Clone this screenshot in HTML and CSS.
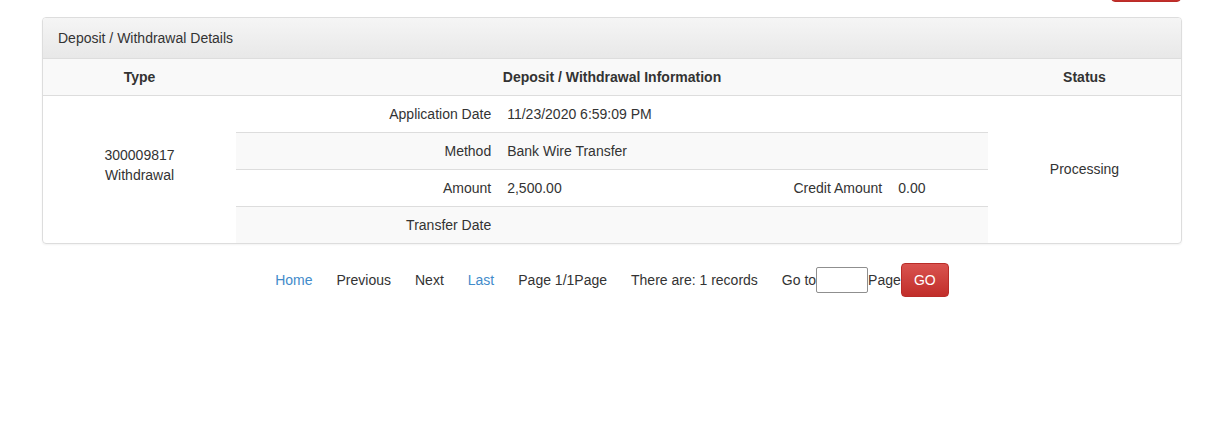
FILE: index.html
```html
<!DOCTYPE html>
<html>
<head>
<meta charset="utf-8">
<link rel="stylesheet" href="styles.css">
</head>
<body>
<div class="wrap">
  <div class="toolbar"><button class="btn-top" aria-label="Back"></button></div>
  <div class="panel">
    <div class="panel-heading">Deposit / Withdrawal Details</div>
    <table class="grid">
      <colgroup>
        <col class="col-side">
        <col>
        <col class="col-side">
      </colgroup>
      <thead>
        <tr>
          <th>Type</th>
          <th>Deposit / Withdrawal Information</th>
          <th>Status</th>
        </tr>
      </thead>
      <tbody>
        <tr>
          <td class="type-cell">300009817<br>Withdrawal</td>
          <td class="info-cell">
            <table class="inner">
              <colgroup>
                <col class="col-35">
                <col class="col-35">
                <col class="col-17">
                <col>
              </colgroup>
              <tr>
                <td class="lbl">Application Date</td>
                <td class="val">11/23/2020 6:59:09 PM</td>
                <td class="lbl"></td>
                <td class="val"></td>
              </tr>
              <tr class="alt">
                <td class="lbl">Method</td>
                <td class="val">Bank Wire Transfer</td>
                <td class="lbl"></td>
                <td class="val"></td>
              </tr>
              <tr>
                <td class="lbl">Amount</td>
                <td class="val">2,500.00</td>
                <td class="lbl">Credit Amount</td>
                <td class="val">0.00</td>
              </tr>
              <tr class="alt">
                <td class="lbl">Transfer Date</td>
                <td class="val"></td>
                <td class="lbl"></td>
                <td class="val"></td>
              </tr>
            </table>
          </td>
          <td class="status-cell">Processing</td>
        </tr>
      </tbody>
    </table>
  </div>
  <div class="pager">
    <a class="pg link">Home</a>
    <span class="pg">Previous</span>
    <span class="pg">Next</span>
    <a class="pg link">Last</a>
    <span class="pg">Page 1/1Page</span>
    <span class="pg">There are: 1 records</span>
    <span class="pg goto">Go to<input class="page-input" type="text">Page<button class="btn-go">GO</button></span>
  </div>
</div>
</body>
</html>
```

FILE: styles.css
```css
html, body {
  margin: 0;
  padding: 0;
  background: #fff;
}
body {
  font-family: "Liberation Sans", Arial, sans-serif;
  font-size: 14px;
  line-height: 20px;
  color: #333;
}
.wrap {
  width: 1140px;
  margin-left: 42px;
}
.toolbar {
  display: flex;
  justify-content: flex-end;
  align-items: flex-end;
  height: 2px;
  margin-bottom: 15px;
}
.btn-top {
  flex: none;
  width: 70px;
  height: 34px;
  margin-right: 1px;
  border: 1px solid #b92c28;
  border-radius: 4px;
  background: linear-gradient(#d9534f, #c12e2a);
}
.panel {
  border: 1px solid #ddd;
  border-radius: 4px;
  overflow: hidden;
  box-shadow: 0 1px 2px rgba(0,0,0,0.05);
  margin-bottom: 20px;
}
.panel-heading {
  padding: 10px 15px;
  background: linear-gradient(#f5f5f5, #e8e8e8);
  border-bottom: 1px solid #ddd;
  color: #333;
}
.grid {
  width: 100%;
  border-collapse: collapse;
  table-layout: fixed;
}
.col-side { width: 193px; }
.grid th {
  font-weight: bold;
  text-align: center;
  padding: 8px;
  background: #f9f9f9;
  border-bottom: 1px solid #ddd;
}
.grid td {
  text-align: center;
  vertical-align: middle;
  padding: 8px;
}
.grid td.info-cell { padding: 0; }
.grid td.type-cell { padding-bottom: 18px; }
.grid td.status-cell { padding-top: 6px; }
.inner {
  width: 100%;
  border-collapse: collapse;
  table-layout: fixed;
}
.col-35 { width: 35%; }
.col-17 { width: 17%; }
.inner tr + tr td { border-top: 1px solid #ddd; }
.inner tr.alt td { background: #f9f9f9; }
.inner td {
  padding: 8px;
  height: 20px;
}
.grid .inner td.lbl { text-align: right; }
.grid .inner td.val { text-align: left; }
.pager {
  display: flex;
  justify-content: center;
  align-items: center;
  height: 34px;
  margin-top: -1px;
}
.pg {
  padding: 0 12px;
  color: #333;
}
.pg.link { color: #428bca; cursor: pointer; }
.goto {
  display: flex;
  align-items: center;
}
.page-input {
  width: 52px;
  height: 26px;
  box-sizing: border-box;
  border: 1px solid #8f8f8f;
  border-radius: 2px;
  margin: 0;
  padding: 0 4px;
  font: 14px "Liberation Sans", Arial, sans-serif;
}
.btn-go {
  width: 48px;
  height: 34px;
  border: 1px solid #b92c28;
  border-radius: 4px;
  background: linear-gradient(#d9534f, #c12e2a);
  color: #fff;
  font: 14px "Liberation Sans", Arial, sans-serif;
  margin-left: 0;
  padding: 0;
}
```
